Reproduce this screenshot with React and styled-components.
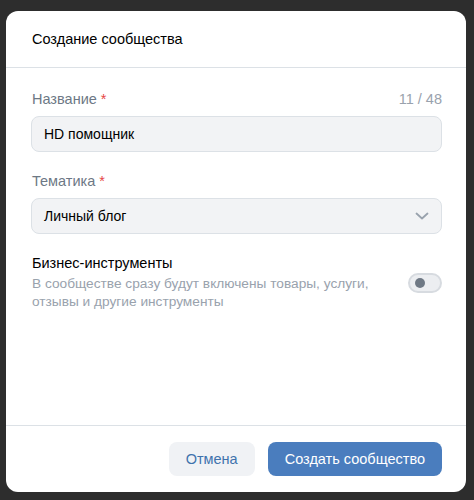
import React, { useState } from "react";
import styled, { createGlobalStyle } from "styled-components";

const GlobalStyle = createGlobalStyle`
  html, body {
    margin: 0;
    padding: 0;
    background: #2d2d2d;
    font-family: "Liberation Sans", Arial, sans-serif;
  }
`;

const Overlay = styled.div`
  width: 474px;
  height: 500px;
  padding: 11px 8px 8px 6px;
  box-sizing: border-box;
  background: #2d2d2d;
`;

const Modal = styled.div`
  width: 460px;
  height: 481px;
  background: #fff;
  border-radius: 12px;
  display: flex;
  flex-direction: column;
  overflow: hidden;
`;

const Header = styled.div`
  height: 57px;
  box-sizing: border-box;
  display: flex;
  align-items: center;
  padding: 0 26px;
  border-bottom: 1px solid #dce1e6;
  font-size: 14.5px;
  color: #000;
`;

const Body = styled.div`
  flex: 1;
  padding: 22px 24px 0 25px;
  display: flex;
  flex-direction: column;
`;

const Field = styled.div`
  display: flex;
  flex-direction: column;
  gap: 8px;
  margin-bottom: ${(p) => p.$mb || 0}px;
`;

const LabelRow = styled.div`
  display: flex;
  justify-content: space-between;
  align-items: center;
  height: 18px;
  padding-left: 1px;
`;

const Label = styled.span`
  font-size: 14.5px;
  color: #6d7885;
`;

const Req = styled.span`
  color: #e64646;
  margin-left: 4px;
`;

const Counter = styled.span`
  font-size: 14.5px;
  color: #99a2ad;
`;

const Input = styled.div`
  height: 36px;
  box-sizing: border-box;
  background: #f2f3f5;
  border: 1px solid #dce1e6;
  border-radius: 8px;
  display: flex;
  align-items: center;
  justify-content: space-between;
  padding: 0 12px;
  font-size: 14px;
  color: #000;
`;

const Chevron = () => (
  <svg width="14" height="8" viewBox="0 0 14 8" fill="none">
    <path d="M1.5 1.5L7 6.5L12.5 1.5" stroke="#99a2ad" strokeWidth="1.8" strokeLinecap="round" strokeLinejoin="round" />
  </svg>
);

const SwitchRow = styled.div`
  display: flex;
  align-items: center;
  justify-content: space-between;
  padding-left: 1px;
`;

const SwitchText = styled.div`
  display: flex;
  flex-direction: column;
`;

const SwitchTitle = styled.div`
  font-size: 14.5px;
  line-height: 18px;
  color: #000;
  margin-bottom: 3px;
`;

const SwitchHint = styled.div`
  font-size: 13.7px;
  line-height: 18px;
  color: #99a2ad;
  width: 345px;
`;

const Toggle = styled.button`
  width: 34px;
  height: 20px;
  border-radius: 10px;
  border: 2px solid #d7dbe0;
  background: ${(p) => (p.$on ? "#4a7dbe" : "#eceef1")};
  padding: 0;
  position: relative;
  cursor: pointer;
  box-sizing: border-box;

  &::after {
    content: "";
    position: absolute;
    top: 3px;
    left: ${(p) => (p.$on ? "18px" : "5px")};
    width: 10px;
    height: 10px;
    border-radius: 50%;
    background: ${(p) => (p.$on ? "#fff" : "#6f7985")};
  }
`;

const Footer = styled.div`
  border-top: 1px solid #dce1e6;
  padding: 16px 24px 16px 25px;
  display: flex;
  justify-content: flex-end;
  gap: 13px;
`;

const Button = styled.button`
  height: 34px;
  border: none;
  border-radius: 8px;
  padding: 0 17px;
  font-family: "Liberation Sans", Arial, sans-serif;
  font-size: 14.5px;
  cursor: pointer;
  background: ${(p) => (p.$primary ? "#4a7dbe" : "#f0f2f5")};
  color: ${(p) => (p.$primary ? "#fff" : "#3f72ad")};
`;

export default function App() {
  const [business, setBusiness] = useState(false);

  return (
    <Overlay>
      <GlobalStyle />
      <Modal>
        <Header>Создание сообщества</Header>
        <Body>
          <Field $mb={20}>
            <LabelRow>
              <Label>
                Название<Req>*</Req>
              </Label>
              <Counter>11 / 48</Counter>
            </LabelRow>
            <Input>HD помощник</Input>
          </Field>
          <Field $mb={20}>
            <LabelRow>
              <Label>
                Тематика<Req>*</Req>
              </Label>
            </LabelRow>
            <Input>
              Личный блог
              <Chevron />
            </Input>
          </Field>
          <SwitchRow>
            <SwitchText>
              <SwitchTitle>Бизнес-инструменты</SwitchTitle>
              <SwitchHint>
                В сообществе сразу будут включены товары, услуги, отзывы и другие инструменты
              </SwitchHint>
            </SwitchText>
            <Toggle $on={business} onClick={() => setBusiness(!business)} />
          </SwitchRow>
        </Body>
        <Footer>
          <Button>Отмена</Button>
          <Button $primary>Создать сообщество</Button>
        </Footer>
      </Modal>
    </Overlay>
  );
}
